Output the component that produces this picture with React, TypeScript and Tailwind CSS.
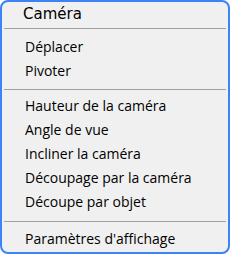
import React from "react";

const Sep = ({ className }: { className: string }) => (
  <div className={"h-px bg-[#a0a0a0] mx-[2px] " + className} />
);

const Item = ({ label }: { label: string }) => (
  <div className="h-[24px] flex items-center pl-[23px] text-[14px] leading-[24px] text-black whitespace-nowrap">
    {label}
  </div>
);

export default function App() {
  return (
    <div className="w-[230px] h-[254px] bg-white">
      <div className="w-[230px] h-[254px] border-2 border-[#3d83f6] rounded-[8px] bg-[#f0f0f0] flex flex-col pt-[2px] font-['Open_Sans',sans-serif]">
        <div className="h-[20px] leading-[20px] pl-[21px] text-[15px] text-black font-['DejaVu_Sans',sans-serif]">
          Caméra
        </div>
        <Sep className="mt-[4px] mb-[6px]" />
        <Item label="Déplacer" />
        <Item label="Pivoter" />
        <Sep className="mt-[6px] mb-[4px]" />
        <Item label="Hauteur de la caméra" />
        <Item label="Angle de vue" />
        <Item label="Incliner la caméra" />
        <Item label="Découpage par la caméra" />
        <Item label="Découpe par objet" />
        <Sep className="mt-[7px] mb-[5px]" />
        <Item label="Paramètres d'affichage" />
      </div>
    </div>
  );
}
